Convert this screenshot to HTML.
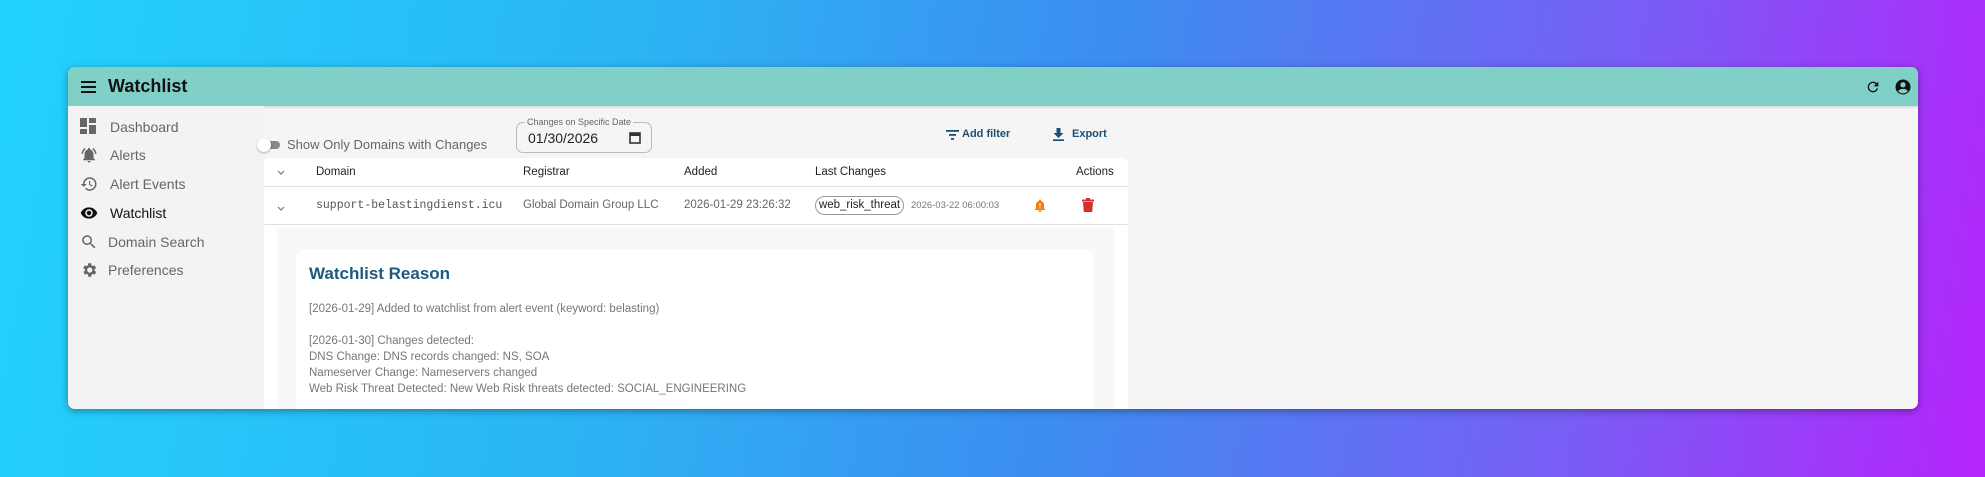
<!DOCTYPE html>
<html><head><meta charset="utf-8"><style>
*{box-sizing:border-box;margin:0;padding:0}
body{width:1985px;height:477px;overflow:hidden;background:linear-gradient(100deg,#22d2fc 0%,#2bb6f4 30%,#3d8cf0 55%,#7a5cf5 80%,#b523fb 100%);font-family:"Liberation Sans",sans-serif;position:relative}
.win{position:absolute;left:68px;top:67px;width:1850px;height:342px;background:#f5f5f5;border-radius:7px;overflow:hidden;box-shadow:0 2px 8px rgba(0,0,0,.35)}
.hdr{position:absolute;left:0;top:0;right:0;height:39px;background:#80d0c7;box-shadow:0 1px 3px rgba(0,0,0,.15)}
.title{position:absolute;left:40px;top:9px;font-size:18px;font-weight:bold;color:#111}
.side{position:absolute;left:0;top:39px;width:196px;bottom:0;background:#f3f3f3}
.item{position:absolute;left:0;height:20px;font-size:14px;color:#666;line-height:20px}
.item svg{position:absolute;left:12px;top:1px}
.item span{position:absolute;left:42px;white-space:nowrap}
.abs{position:absolute;white-space:nowrap}
.card{position:absolute;left:196px;top:91px;width:864px;height:260px;background:#fff;border-radius:6px}
.th{font-size:11.5px;color:#222}
.td{font-size:11.5px;color:#666}
</style></head><body>
<div class="win">
 <div class="hdr">
  <svg class="abs" style="left:13px;top:13px" width="16" height="14" viewBox="0 0 16 14"><rect y="1" width="15" height="2" fill="#111"/><rect y="6" width="15" height="2" fill="#111"/><rect y="11" width="15" height="2" fill="#111"/></svg>
  <div class="title">Watchlist</div>
  <svg class="abs" style="left:1797px;top:12px" width="16" height="16" viewBox="0 0 24 24"><path d="M17.65 6.350A7.96 7.96 0 0 0 12 4a8 8 0 1 0 7.73 10h-2.080A6 6 0 1 1 12 6c1.66 0 3.14.69 4.22 1.78L13 11h7V4z" fill="#111"/></svg>
  <svg class="abs" style="left:1826px;top:11px" width="18" height="18" viewBox="0 0 24 24"><circle cx="12" cy="12" r="10" fill="#111"/><circle cx="12" cy="9" r="3.5" fill="#80d0c7"/><path d="M5.5 17.5c1.5-2.2 4-3 6.5-3s5 .8 6.5 3A8.5 8.5 0 0 1 12 20.5a8.5 8.5 0 0 1-6.5-3z" fill="#80d0c7"/></svg>
 </div>
 <div class="side">
  <div class="item" style="top:11px"><svg width="16" height="16" viewBox="0 0 16 16"><rect x="0" y="0" width="7" height="9" fill="#666"/><rect x="9" y="0" width="7" height="5" fill="#666"/><rect x="0" y="11" width="7" height="5" fill="#666"/><rect x="9" y="7" width="7" height="9" fill="#666"/></svg><span>Dashboard</span></div>
  <div class="item" style="top:39px"><svg width="18" height="18" viewBox="0 0 24 24"><path d="M12 22a2 2 0 0 0 2-2h-4a2 2 0 0 0 2 2zm6-6v-5c0-3.100-1.6-5.6-4.5-6.3V4a1.5 1.5 0 0 0-3 0v.7C7.6 5.4 6 7.9 6 11v5l-2 2v1h16v-1zM7.6 4.1 6.2 2.7A10.4 10.4 0 0 0 2 10.5h2a8.4 8.4 0 0 1 3.6-6.4zM20 10.5h2a10.4 10.4 0 0 0-4.2-7.8l-1.4 1.4a8.4 8.4 0 0 1 3.6 6.4z" fill="#666"/></svg><span>Alerts</span></div>
  <div class="item" style="top:68px"><svg width="18" height="18" viewBox="0 0 24 24"><path d="M13 3a9 9 0 0 0-9 9H1l3.9 3.9L9 12H6a7 7 0 1 1 2.05 4.95l-1.42 1.42A9 9 0 1 0 13 3zm-1 5v5l4.25 2.52.77-1.28-3.52-2.090V8z" fill="#666"/></svg><span>Alert Events</span></div>
  <div class="item" style="top:97px;color:#111"><svg width="18" height="18" viewBox="0 0 24 24"><path d="M12 4.5C7 4.5 2.7 7.6 1 12c1.7 4.4 6 7.5 11 7.5s9.3-3.100 11-7.5c-1.7-4.4-6-7.5-11-7.5zm0 12.5a5 5 0 1 1 0-10 5 5 0 0 1 0 10zm0-8a3 3 0 1 0 0 6 3 3 0 0 0 0-6z" fill="#111"/></svg><span>Watchlist</span></div>
  <div class="item" style="top:126px"><svg width="18" height="18" viewBox="0 0 24 24"><path d="M15.5 14h-.8l-.3-.3A6.5 6.5 0 1 0 9.5 16a6.5 6.5 0 0 0 4.2-1.6l.3.3v.8l5 5 1.5-1.5zm-6 0A4.5 4.5 0 1 1 14 9.5 4.5 4.5 0 0 1 9.5 14z" fill="#666"/></svg><span style="left:40px">Domain Search</span></div>
  <div class="item" style="top:154px"><svg width="18" height="18" viewBox="0 0 24 24"><path d="M19.4 13a7.5 7.5 0 0 0 0-2l2.1-1.6-2-3.5-2.5 1a7.3 7.3 0 0 0-1.7-1L15 3h-4l-.4 2.9a7.3 7.3 0 0 0-1.7 1l-2.5-1-2 3.5L6.6 11a7.5 7.5 0 0 0 0 2l-2.1 1.6 2 3.5 2.5-1a7.3 7.3 0 0 0 1.7 1L11 21h4l.4-2.9a7.3 7.3 0 0 0 1.7-1l2.5 1 2-3.5zM13 15.5a3.5 3.5 0 1 1 0-7 3.5 3.5 0 0 1 0 7z" fill="#666"/></svg><span style="left:40px">Preferences</span></div>
 </div>
 <div class="abs" style="left:194px;top:74px;width:18px;height:8px;border-radius:4px;background:#888"></div>
 <div class="abs" style="left:189px;top:71px;width:14px;height:14px;border-radius:7px;background:#fff;box-shadow:0 1px 2px rgba(0,0,0,.3)"></div>
 <div class="abs" style="left:219px;top:70px;font-size:13px;color:#666">Show Only Domains with Changes</div>
 <div class="abs" style="left:448px;top:55px;width:136px;height:31px;border:1px solid #bbb;border-radius:7px"></div>
 <div class="abs" style="left:457px;top:50px;font-size:9px;color:#666;background:#f5f5f5;padding:0 2px">Changes on Specific Date</div>
 <div class="abs" style="left:460px;top:63px;font-size:14px;color:#222">01/30/2026</div>
 <svg class="abs" style="left:561px;top:64px" width="12" height="13" viewBox="0 0 12 13"><rect x="1" y="2" width="10" height="10" fill="none" stroke="#333" stroke-width="1.6"/><rect x="1" y="2" width="10" height="3" fill="#333"/></svg>
 <svg class="abs" style="left:878px;top:63px" width="13" height="10" viewBox="0 0 13 10"><rect width="13" height="1.8" fill="#1d4f72"/><rect x="3" y="4" width="7" height="1.8" fill="#1d4f72"/><rect x="5" y="8" width="3" height="1.8" fill="#1d4f72"/></svg>
 <div class="abs" style="left:894px;top:61px;font-size:11px;font-weight:bold;color:#1d4f72">Add filter</div>
 <svg class="abs" style="left:985px;top:61px" width="11" height="13" viewBox="0 0 11 13"><path d="M3.5 0h4v5h3L5.5 10 .5 5h3z" fill="#1d4f72"/><rect y="11.3" width="11" height="1.7" fill="#1d4f72"/></svg>
 <div class="abs" style="left:1004px;top:61px;font-size:11px;font-weight:bold;color:#1d4f72">Export</div>
 <div class="card">
  <div class="abs" style="left:0;right:0;top:28px;height:1px;background:#e2e2e2"></div>
  <div class="abs" style="left:0;right:0;top:66px;height:1px;background:#e2e2e2"></div>
  <svg class="abs" style="left:13px;top:12px" width="8" height="6" viewBox="0 0 8 6"><path d="M1 1l3 3 3-3" stroke="#777" stroke-width="1.2" fill="none"/></svg>
  <svg class="abs" style="left:13px;top:48px" width="8" height="6" viewBox="0 0 8 6"><path d="M1 1l3 3 3-3" stroke="#777" stroke-width="1.2" fill="none"/></svg>
  <div class="abs th" style="left:52px;top:8px">Domain</div>
  <div class="abs th" style="left:259px;top:8px">Registrar</div>
  <div class="abs th" style="left:420px;top:8px">Added</div>
  <div class="abs th" style="left:551px;top:8px">Last Changes</div>
  <div class="abs th" style="left:812px;top:8px">Actions</div>
  <div class="abs td" style="left:52px;top:41px;font-family:'Liberation Mono',monospace;font-size:11.5px;color:#555">support-belastingdienst.icu</div>
  <div class="abs td" style="left:259px;top:41px">Global Domain Group LLC</div>
  <div class="abs td" style="left:420px;top:41px">2026-01-29 23:26:32</div>
  <div class="abs" style="left:551px;top:38px;width:89px;height:19px;border:1px solid #999;border-radius:10px;font-size:11.5px;color:#222;line-height:17px;text-align:center">web_risk_threat</div>
  <div class="abs" style="left:647px;top:42px;font-size:9.5px;color:#777">2026-03-22 06:00:03</div>
  <svg class="abs" style="left:770px;top:41px" width="12" height="13" viewBox="0 0 12 13"><path d="M6 0.5c.6 0 1 .4 1 1v.5c1.8.5 3 2 3 4v3.5l1.5 1.5H.5L2 9.5V6c0-2 1.2-3.5 3-4v-.5c0-.6.4-1 1-1zM4.5 11.5h3a1.5 1.5 0 0 1-3 0z" fill="#f57c00"/><rect x="5.4" y="4" width="1.2" height="3.5" fill="#fff"/><rect x="5.4" y="8.3" width="1.2" height="1.2" fill="#fff"/></svg>
  <svg class="abs" style="left:818px;top:40px" width="12" height="14" viewBox="0 0 12 14"><rect x="0" y="1.5" width="12" height="2" fill="#d32f2f"/><rect x="4" y="0" width="4" height="2" fill="#d32f2f"/><path d="M1 4h10l-.8 10H1.8z" fill="#d32f2f"/></svg>
  <div class="abs" style="left:13px;top:70px;width:837px;height:200px;background:#f8f8f8"></div>
  <div class="abs" style="left:32px;top:91px;width:798px;height:200px;background:#fff;border-radius:10px"></div>
  <div class="abs" style="left:45px;top:106px;font-size:17px;font-weight:bold;color:#1d5a80">Watchlist Reason</div>
  <div class="abs" style="left:45px;top:143px;font-size:11.5px;color:#777;line-height:16px">[2026-01-29] Added to watchlist from alert event (keyword: belasting)<br><br>[2026-01-30] Changes detected:<br>DNS Change: DNS records changed: NS, SOA<br>Nameserver Change: Nameservers changed<br>Web Risk Threat Detected: New Web Risk threats detected: SOCIAL_ENGINEERING</div>
 </div>
</div>
</body></html>
